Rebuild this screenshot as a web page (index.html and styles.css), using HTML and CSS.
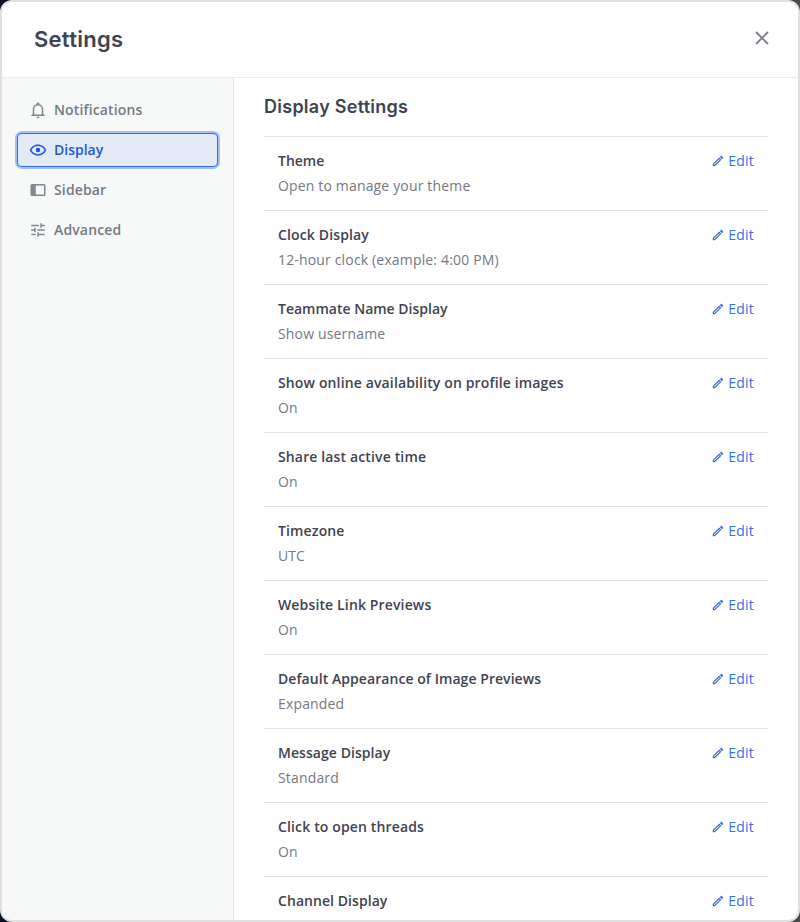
FILE: index.html
```html
<!DOCTYPE html>
<html lang="en">
<head>
<meta charset="utf-8">
<title>Settings</title>
<link rel="stylesheet" href="styles.css">
</head>
<body>
<svg class="sprite" aria-hidden="true">
  <symbol id="pencil" viewBox="0 0 24 24"><path d="M14.06,9L15,9.94L5.92,19H5V18.08L14.06,9M17.66,3C17.41,3 17.15,3.1 16.96,3.29L15.13,5.12L18.88,8.87L20.71,7.04C21.1,6.65 21.1,6 20.71,5.63L18.37,3.29C18.17,3.09 17.92,3 17.66,3M14.06,6.19L3,17.25V21H6.75L17.81,9.94L14.06,6.19Z"/></symbol>
</svg>
<div class="modal" role="dialog" aria-label="Settings">
  <header class="header">
    <h1>Settings</h1>
    <button class="close" aria-label="Close"><svg viewBox="0 0 14 14"><path d="M1 1l12 12M13 1L1 13"/></svg></button>
  </header>
  <div class="body">
    <nav class="tabs">
      <button class="tab"><svg class="icon" viewBox="0 0 24 24"><path d="M10 21H14C14 22.1 13.1 23 12 23S10 22.1 10 21M21 19V20H3V19L5 17V11C5 7.9 7 5.2 10 4.3V4C10 2.9 10.9 2 12 2S14 2.9 14 4V4.3C17 5.2 19 7.9 19 11V17L21 19M17 11C17 8.2 14.8 6 12 6S7 8.2 7 11V18H17V11Z"/></svg>Notifications</button>
      <button class="tab active"><svg class="icon" viewBox="0 0 24 24"><path d="M12,9A3,3 0 0,1 15,12A3,3 0 0,1 12,15A3,3 0 0,1 9,12A3,3 0 0,1 12,9M12,4.5C17,4.5 21.27,7.61 23,12C21.27,16.39 17,19.5 12,19.5C7,19.5 2.73,16.39 1,12C2.73,7.61 7,4.5 12,4.5M3.18,12C4.83,15.36 8.24,17.5 12,17.5C15.76,17.5 19.17,15.36 20.82,12C19.17,8.64 15.76,6.5 12,6.5C8.24,6.5 4.83,8.64 3.18,12Z"/></svg>Display</button>
      <button class="tab"><svg class="icon" viewBox="0 0 24 24"><path d="M20 4H4A2 2 0 0 0 2 6V18A2 2 0 0 0 4 20H20A2 2 0 0 0 22 18V6A2 2 0 0 0 20 4M20 18H9V6H20V18Z"/></svg>Sidebar</button>
      <button class="tab"><svg class="icon" viewBox="0 0 24 24"><path d="M3,17V19H9V17H3M3,5V7H13V5H3M13,21V19H21V17H13V15H11V21H13M7,9V11H3V13H7V15H9V9H7M21,13V11H11V13H21M15,9H17V7H21V5H17V3H15V9Z"/></svg>Advanced</button>
    </nav>
    <main class="content">
      <h2>Display Settings</h2>
      <section class="row"><div><h4 class="tight">Theme</h4><p>Open to manage your theme</p></div><button class="edit"><svg><use href="#pencil"/></svg>Edit</button></section>
      <section class="row"><div><h4>Clock Display</h4><p>12-hour clock (example: 4:00 PM)</p></div><button class="edit"><svg><use href="#pencil"/></svg>Edit</button></section>
      <section class="row"><div><h4 class="tight">Teammate Name Display</h4><p>Show username</p></div><button class="edit"><svg><use href="#pencil"/></svg>Edit</button></section>
      <section class="row"><div><h4>Show online availability on profile images</h4><p>On</p></div><button class="edit"><svg><use href="#pencil"/></svg>Edit</button></section>
      <section class="row"><div><h4>Share last active time</h4><p>On</p></div><button class="edit"><svg><use href="#pencil"/></svg>Edit</button></section>
      <section class="row"><div><h4>Timezone</h4><p class="tight">UTC</p></div><button class="edit"><svg><use href="#pencil"/></svg>Edit</button></section>
      <section class="row"><div><h4>Website Link Previews</h4><p>On</p></div><button class="edit"><svg><use href="#pencil"/></svg>Edit</button></section>
      <section class="row"><div><h4 class="snug">Default Appearance of Image Previews</h4><p>Expanded</p></div><button class="edit"><svg><use href="#pencil"/></svg>Edit</button></section>
      <section class="row"><div><h4 class="snug">Message Display</h4><p>Standard</p></div><button class="edit"><svg><use href="#pencil"/></svg>Edit</button></section>
      <section class="row"><div><h4>Click to open threads</h4><p>On</p></div><button class="edit"><svg><use href="#pencil"/></svg>Edit</button></section>
      <section class="row"><div><h4 class="snug">Channel Display</h4></div><button class="edit"><svg><use href="#pencil"/></svg>Edit</button></section>
    </main>
  </div>
</div>
</body>
</html>
```
FILE: styles.css
```css
* { box-sizing: border-box; }
body {
  margin: 0;
  height: 922px;
  overflow: hidden;
  background: linear-gradient(90deg, #0b1024 50%, #4a4a4a 50%);
  font: 14px/20px "Open Sans", sans-serif;
  color: #3f4350;
}
h1, h2, h4, p { margin: 0; }
button { border: 0; padding: 0; background: none; font: inherit; }
.sprite { display: none; }
.modal {
  display: flex;
  flex-direction: column;
  height: 922px;
  border: 2px solid #e0e0e0;
  border-radius: 12px;
  background: #fff;
  overflow: hidden;
}
.header {
  display: flex;
  flex: none;
  justify-content: space-between;
  height: 76px;
  padding: 23px 29.5px 0 32px;
  border-bottom: 1px solid #ebebed;
}
h1 { font: 600 22px/28px "Inter", sans-serif; letter-spacing: 0.27px; }
.close { width: 14px; height: 14px; margin-top: 5.5px; color: #7d808a; }
.close svg { display: block; width: 14px; height: 14px; fill: none; stroke: currentColor; stroke-width: 1.9; }
.body { display: flex; flex: 1; min-height: 0; }
.tabs {
  display: flex;
  flex-direction: column;
  gap: 8px;
  width: 232px;
  padding: 16px 16px 0;
  background: #f7f9f9;
  border-right: 1px solid #e5e7e9;
}
.tab {
  display: flex;
  align-items: center;
  gap: 7px;
  width: 199px;
  height: 32px;
  padding-left: 11px;
  border-radius: 4px;
  font-weight: 600;
  letter-spacing: 0.14px;
  color: #757882;
}
.tab.active {
  letter-spacing: 0;
  color: #1c58d9;
  background: #e3eaf5;
  box-shadow: 0 0 0 1px #2f6be3, 0 0 0 3px #a4bff2;
}
.icon { width: 18px; height: 18px; fill: currentColor; }
.tab:not(.active) .icon { opacity: 0.88; }
.content { flex: 1; padding: 17px 30px 0; overflow: hidden; }
h2 { height: 41px; font: 600 18px/24px "Inter", sans-serif; letter-spacing: 0.26px; }
.row {
  display: flex;
  justify-content: space-between;
  align-items: flex-start;
  height: 74px;
  padding: 14px 14px 0;
  border-top: 1px solid #e3e4e6;
}
h4 { font: inherit; font-weight: 600; letter-spacing: 0.14px; }
.row p { margin-top: 5px; letter-spacing: 0.16px; color: #757882; }
h4.snug { letter-spacing: 0.06px; }
h4.tight, .row p.tight { letter-spacing: 0; }
.edit { display: flex; align-items: center; gap: 3px; height: 20px; letter-spacing: 0.25px; color: #386fe0; }
.edit svg { width: 14px; height: 14px; margin-top: -1px; fill: currentColor; }
```
